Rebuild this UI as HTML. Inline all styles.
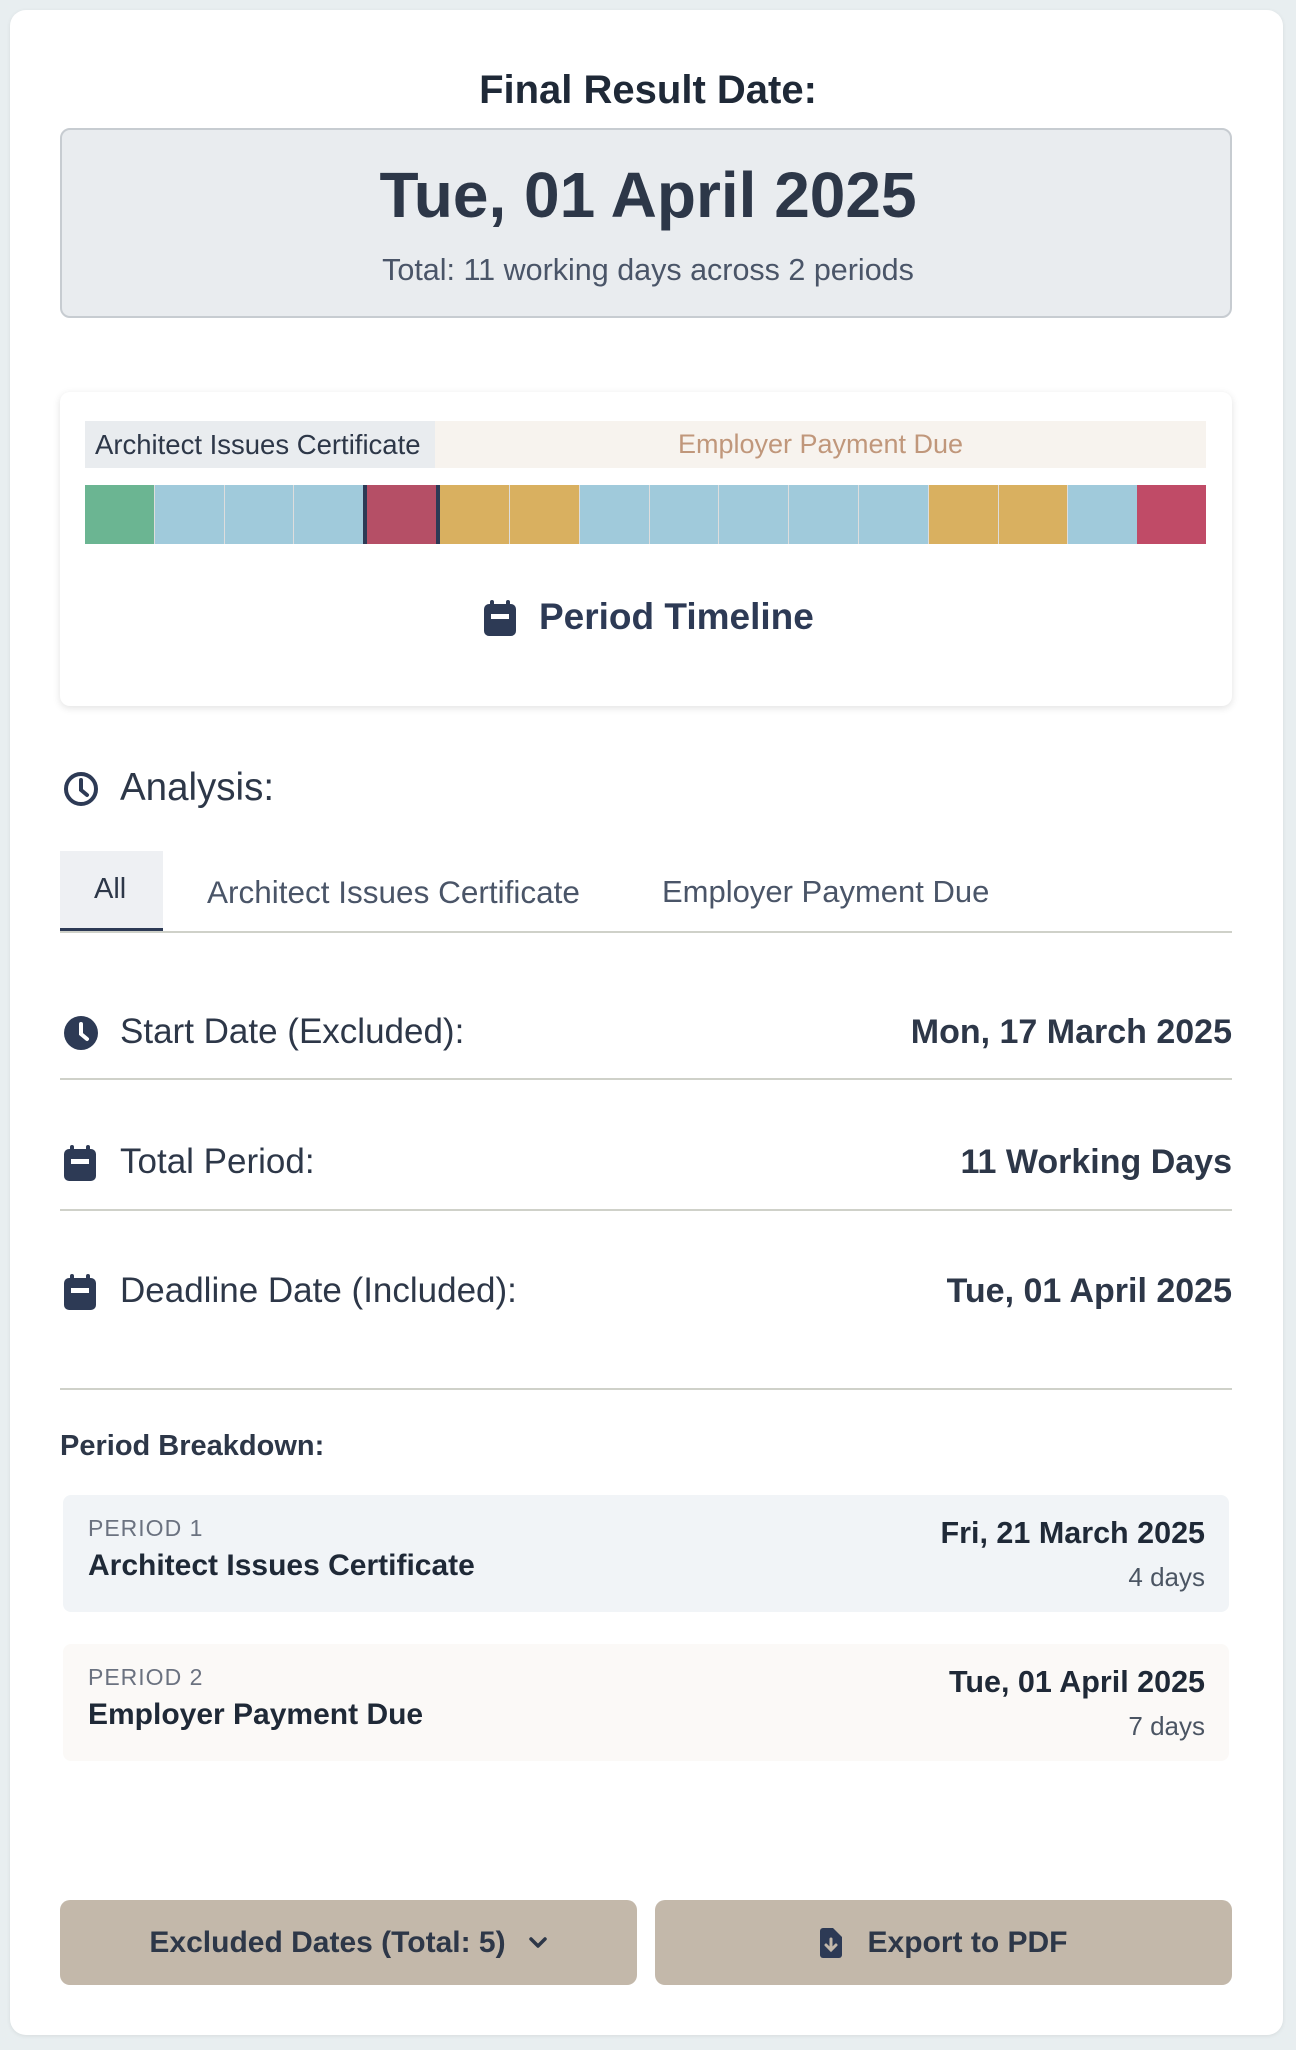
<!DOCTYPE html>
<html><head><meta charset="utf-8"><style>
*{box-sizing:border-box;margin:0;padding:0}
body{width:1296px;height:2050px;background:#e8eef0;font-family:"Liberation Sans",sans-serif;color:#2d3748;position:relative;overflow:hidden}
.card{position:absolute;left:10px;top:10px;width:1273px;height:2025px;background:#fff;border-radius:16px;box-shadow:0 1px 4px rgba(0,0,0,.08)}
.abs{position:absolute}
.c{text-align:center}
.ic{position:absolute;fill:#2d3a55}
.row{position:absolute;left:60px;width:1172px;height:40px;font-size:35px}
.row .l{position:absolute;left:60px;top:-1px}
.row .v{position:absolute;right:0;top:0;font-weight:bold;font-size:34px}
.hl{position:absolute;left:60px;width:1172px;height:2px;background:#cfd1c9}
.pc{position:absolute;left:63px;width:1166px;height:117px;border-radius:8px}
.pc .n{position:absolute;left:25px;top:20px;font-size:23px;color:#6b7280;letter-spacing:1px}
.pc .t{position:absolute;left:25px;top:54px;font-size:30px;font-weight:bold;color:#1f2937}
.pc .d{position:absolute;right:24px;top:21px;font-size:30.5px;font-weight:bold;color:#1f2937}
.pc .k{position:absolute;right:24px;top:67px;font-size:26px;color:#4b5563}
.btn{position:absolute;top:1900px;width:577px;height:85px;background:#c3b8aa;border-radius:10px;font-size:30px;font-weight:bold;color:#2d3748;display:flex;align-items:center;justify-content:center}
</style></head><body>
<div class="card"></div>
<div class="abs c" style="left:0;width:1296px;top:68px;font-size:40px;font-weight:bold;color:#1f2937">Final Result Date:</div>
<div class="abs" style="left:60px;top:128px;width:1172px;height:190px;background:#e9ecef;border:2px solid #c7ccd1;border-radius:10px"></div>
<div class="abs c" style="left:0;width:1296px;top:158px;font-size:64px;font-weight:bold;color:#2d3748">Tue, 01 April 2025</div>
<div class="abs c" style="left:0;width:1296px;top:253px;font-size:30.5px;color:#4a5568">Total: 11 working days across 2 periods</div>

<div class="abs" style="left:60px;top:392px;width:1172px;height:314px;background:#fff;border-radius:10px;box-shadow:0 2px 8px rgba(0,0,0,.12)"></div>
<div class="abs" style="left:85px;top:421px;width:350px;height:47px;background:#e9ecef;font-size:27.5px;line-height:47px;padding-left:10px;color:#2d3748;white-space:nowrap">Architect Issues Certificate</div>
<div class="abs c" style="left:435px;top:421px;width:771px;height:47px;background:#f7f3ee;font-size:27px;line-height:47px;color:#c0977b">Employer Payment Due</div>
<div class="abs" style="left:85px;top:485px;width:1121px;height:59px;display:flex">
<div style="flex:1;background:#6bb592"></div><div style="flex:1;background:#a0cadb;border-left:1px solid #ddd"></div><div style="flex:1;background:#a0cadb;border-left:1px solid #ddd"></div><div style="flex:1;background:#a0cadb;border-left:1px solid #ddd"></div><div style="flex:1;background:#b54f66;border-left:4px solid #2d3a55;border-right:4px solid #2d3a55"></div><div style="flex:1;background:#d9b060"></div><div style="flex:1;background:#d9b060;border-left:1px solid #ddd"></div><div style="flex:1;background:#a0cadb;border-left:1px solid #ddd"></div><div style="flex:1;background:#a0cadb;border-left:1px solid #ddd"></div><div style="flex:1;background:#a0cadb;border-left:1px solid #ddd"></div><div style="flex:1;background:#a0cadb;border-left:1px solid #ddd"></div><div style="flex:1;background:#a0cadb;border-left:1px solid #ddd"></div><div style="flex:1;background:#d9b060;border-left:1px solid #ddd"></div><div style="flex:1;background:#d9b060;border-left:1px solid #ddd"></div><div style="flex:1;background:#a0cadb;border-left:1px solid #ddd"></div><div style="flex:1;background:#c04b67"></div>
</div>
<svg class="ic" style="left:483px;top:600px" width="34" height="36" viewBox="0 0 34 36"><rect x="7" y="0" width="4" height="7" rx="2"/><rect x="23" y="0" width="4" height="7" rx="2"/><rect x="1" y="4" width="32" height="32" rx="5"/><rect x="8" y="14" width="18" height="5" fill="#fff"/></svg>
<div class="abs" style="left:539px;top:596px;font-size:37px;font-weight:bold;color:#2d3a55">Period Timeline</div>

<svg class="ic" style="left:63px;top:771px" width="36" height="36" viewBox="0 0 36 36"><circle cx="18" cy="18" r="15" fill="none" stroke="#2d3a55" stroke-width="4"/><path d="M18 9v10l6 5" fill="none" stroke="#2d3a55" stroke-width="4" stroke-linecap="round"/></svg>
<div class="abs" style="left:120px;top:766px;font-size:38.5px;color:#2d3748">Analysis:</div>

<div class="abs" style="left:60px;top:851px;width:103px;height:81px;background:#eef0f3;border-bottom:4px solid #2d3a55"></div>
<div class="abs" style="left:94px;top:873px;font-size:29px;color:#2d3748">All</div>
<div class="abs" style="left:207px;top:874px;font-size:31.5px;color:#4a5568">Architect Issues Certificate</div>
<div class="abs" style="left:662px;top:874px;font-size:31px;color:#4a5568">Employer Payment Due</div>
<div class="hl" style="top:931px"></div>

<div class="row" style="top:1013px"><svg class="ic" style="left:3px;top:2px" width="36" height="36" viewBox="0 0 36 36"><circle cx="18" cy="18" r="17"/><path d="M18 9v10l6 5" fill="none" stroke="#fff" stroke-width="4" stroke-linecap="round"/></svg><span class="l">Start Date (Excluded):</span><span class="v">Mon, 17 March 2025</span></div>
<div class="hl" style="top:1078px"></div>
<div class="row" style="top:1143px"><svg class="ic" style="left:3px;top:2px" width="34" height="36" viewBox="0 0 34 36"><rect x="7" y="0" width="4" height="7" rx="2"/><rect x="23" y="0" width="4" height="7" rx="2"/><rect x="1" y="4" width="32" height="32" rx="5"/><rect x="8" y="14" width="18" height="5" fill="#fff"/></svg><span class="l">Total Period:</span><span class="v">11 Working Days</span></div>
<div class="hl" style="top:1209px"></div>
<div class="row" style="top:1272px"><svg class="ic" style="left:3px;top:2px" width="34" height="36" viewBox="0 0 34 36"><rect x="7" y="0" width="4" height="7" rx="2"/><rect x="23" y="0" width="4" height="7" rx="2"/><rect x="1" y="4" width="32" height="32" rx="5"/><rect x="8" y="14" width="18" height="5" fill="#fff"/></svg><span class="l">Deadline Date (Included):</span><span class="v">Tue, 01 April 2025</span></div>
<div class="hl" style="top:1388px"></div>

<div class="abs" style="left:60px;top:1430px;font-size:29px;font-weight:bold;color:#2d3748">Period Breakdown:</div>
<div class="pc" style="top:1495px;background:#f1f4f7"><span class="n">PERIOD 1</span><span class="t">Architect Issues Certificate</span><span class="d">Fri, 21 March 2025</span><span class="k">4 days</span></div>
<div class="pc" style="top:1644px;background:#fbf9f7"><span class="n">PERIOD 2</span><span class="t">Employer Payment Due</span><span class="d">Tue, 01 April 2025</span><span class="k">7 days</span></div>

<div class="btn" style="left:60px">Excluded Dates (Total: 5)<svg style="margin-left:22px" width="20" height="14" viewBox="0 0 20 14"><path d="M3 3l7 7 7-7" fill="none" stroke="#2d3748" stroke-width="3.5" stroke-linecap="round" stroke-linejoin="round"/></svg></div>
<div class="btn" style="left:655px"><svg style="margin-right:26px" width="22" height="30" viewBox="0 0 22 30"><path d="M3 0h10l9 9v18a3 3 0 0 1-3 3H3a3 3 0 0 1-3-3V3a3 3 0 0 1 3-3z" fill="#2d3a55"/><path d="M11 11v11M6 17l5 5 5-5" fill="none" stroke="#c3b8aa" stroke-width="3" stroke-linecap="round"/></svg>Export to PDF</div>
</body></html>
